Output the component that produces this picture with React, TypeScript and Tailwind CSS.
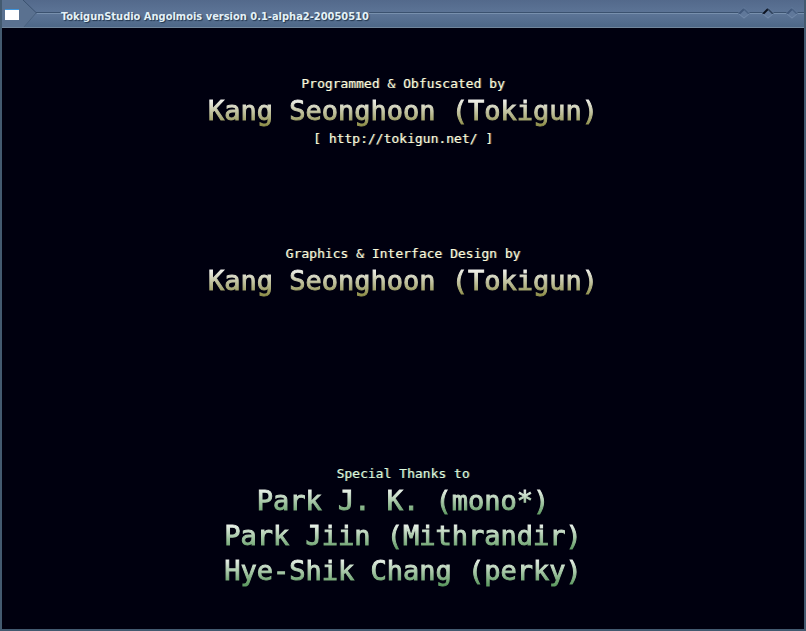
type Tone = 'gold' | 'green';

const fills: Record<Tone, { small: string; large: string }> = {
  gold: {
    small: 'text-[#fafadc] [text-shadow:1px_0_0_#fafadc66]',
    large: 'from-[#f8f8f8] from-15% to-[#949450] to-90%',
  },
  green: {
    small: 'text-[#dcf8dc] [text-shadow:1px_0_0_#dcf8dc66]',
    large: 'from-[#f4f8f4] from-15% to-[#609c64] to-90%',
  },
};

function SmallLine({ tone, children }: { tone: Tone; children: string }) {
  return (
    <p className={`${fills[tone].small} text-[13px] leading-[18px] whitespace-pre`}>
      {children}
    </p>
  );
}

function LargeLine({ tone, children }: { tone: Tone; children: string }) {
  return (
    <h2 className={`bg-gradient-to-b ${fills[tone].large} bg-clip-text text-[27px] leading-[35px] whitespace-pre text-transparent [-webkit-text-stroke:1px_transparent]`}>
      {children}
    </h2>
  );
}

function TitleBar() {
  return (
    <header className="relative flex h-7 items-center border-b border-[#71869c] bg-gradient-to-b from-[#53698b] via-[#5d7597] to-[#4d6787] pl-[2px]">
      <svg aria-hidden="true" className="absolute top-0 left-0 h-7 w-15" viewBox="0 0 60 28" fill="none">
        <path d="M21 0L34 13L22 27H0V0Z" fill="#5a7190" />
        <path d="M21 0L34 12.5H60" stroke="#3b526f" />
        <path d="M34 13L22 27" stroke="#4a617e" />
        <path d="M35 13.5H60" stroke="#7890ad" />
      </svg>
      <svg aria-hidden="true" className="relative h-4 w-4" viewBox="0 0 16 16">
        <rect x="1" y="3" width="14" height="11" fill="#ffffff" />
        <rect x="1" y="3" width="14" height="1" fill="#3c94dc" />
      </svg>
      <h1 className="relative ml-[41px] pt-[6px] font-['DejaVu_Sans_Condensed','DejaVu_Sans',sans-serif] text-[11px] leading-4 font-bold whitespace-nowrap text-[#e4f2f8] [text-shadow:1px_1px_1px_#22364e]">
        TokigunStudio Angolmois version 0.1-alpha2-20050510
      </h1>
      <div className="mb-px h-0.5 flex-1 border-t border-b border-t-[#3b526f] border-b-[#7890ad]" />
      <div className="absolute top-1 right-0 flex">
        <WindowButton label="Minimize" left="#40587a" right="#486082" />
        <WindowButton label="Maximize" left="#0c1420" right="#2c3f58" />
        <WindowButton label="Close" left="#40587a" right="#486082" />
      </div>
    </header>
  );
}

function WindowButton({ label, left, right }: { label: string; left: string; right: string }) {
  return (
    <button type="button" aria-label={label} className="flex w-6 justify-center">
      <svg className="h-4 w-4" viewBox="0 0 16 16" fill="none">
        <path d="M2 9L8 3L14 9L8 15Z" fill="#60789a" />
        <path d="M3 10L8 5" stroke={left} strokeWidth="2" />
        <path d="M8 5L13 10" stroke={right} strokeWidth="1.5" />
        <path d="M3 10L8 14L13 10" stroke="#7088a8" />
      </svg>
    </button>
  );
}

export default function App() {
  return (
    <div className="flex min-h-screen flex-col border-x-2 border-b-2 border-[#435a70] bg-[#00000f]">
      <TitleBar />
      <main className="flex flex-1 flex-col items-center pt-[47px] text-center font-['DejaVu_Sans_Mono',monospace]">
        <section className="flex flex-col items-center">
          <SmallLine tone="gold">{'Programmed & Obfuscated by'}</SmallLine>
          <LargeLine tone="gold">Kang Seonghoon (Tokigun)</LargeLine>
          <a href="http://tokigun.net/" className="mt-[2px]">
            <SmallLine tone="gold">[ http://tokigun.net/ ]</SmallLine>
          </a>
        </section>
        <section className="mt-[97px] flex flex-col items-center">
          <SmallLine tone="gold">{'Graphics & Interface Design by'}</SmallLine>
          <LargeLine tone="gold">Kang Seonghoon (Tokigun)</LargeLine>
        </section>
        <section className="mt-[167px] flex flex-col items-center">
          <SmallLine tone="green">Special Thanks to</SmallLine>
          <LargeLine tone="green">Park J. K. (mono*)</LargeLine>
          <LargeLine tone="green">Park Jiin (Mithrandir)</LargeLine>
          <LargeLine tone="green">Hye-Shik Chang (perky)</LargeLine>
        </section>
      </main>
    </div>
  );
}
